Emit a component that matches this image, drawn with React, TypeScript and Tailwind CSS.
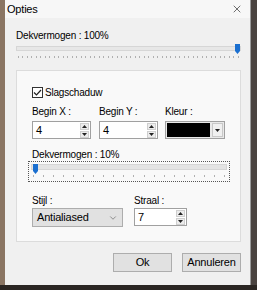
import { ChevronDown, X } from "lucide-react";

const font = { fontFamily: '"Liberation Sans", Arial, sans-serif' };

function Spinner({ value, width }: { value: string; width: string }) {
  return (
    <div className={`${width} flex h-[18px] items-center border border-[#a0a0a0] bg-white`}>
      <span className="flex-1 pl-[3px] text-[11px] leading-none text-black">{value}</span>
      <div className="flex h-full w-[10px] flex-col justify-center gap-[1px] pr-[1px]">
        <div className="flex h-[7px] items-center justify-center border border-[#cfcfcf] bg-[#ececec]">
          <svg width="5" height="3" viewBox="0 0 5 3">
            <path d="M0 3 L2.5 0 L5 3 Z" fill="#222" />
          </svg>
        </div>
        <div className="flex h-[7px] items-center justify-center border border-[#cfcfcf] bg-[#ececec]">
          <svg width="5" height="3" viewBox="0 0 5 3">
            <path d="M0 0 L2.5 3 L5 0 Z" fill="#222" />
          </svg>
        </div>
      </div>
    </div>
  );
}

function Thumb() {
  return (
    <svg width="5" height="10" viewBox="0 0 5 10">
      <path d="M0 0 H5 V7 L2.5 10 L0 7 Z" fill="#1a6fd0" />
    </svg>
  );
}

function Ticks({ count }: { count: number }) {
  return (
    <div className="flex h-[2px] justify-between px-[2px]">
      {Array.from({ length: count }).map((_, i) => (
        <div key={i} className="h-[2px] w-[1px] bg-[#b0b0b0]" />
      ))}
    </div>
  );
}

const label = "text-[10px] leading-[12px] tracking-[-0.2px] text-black";

export default function App() {
  return (
    <div className="flex h-[290px] w-[257px] flex-col bg-[#2b2623]" style={font}>
      <div className="flex h-[285px]">
        <div className="w-[5px] bg-[#8a7563]" />
        <div className="flex w-[246px] flex-col border-r border-[#9a9a9a] bg-[#f0f0f0]">
          <div className="flex h-[18px] items-center justify-between bg-[#f7f7f7] pl-[2px] pr-[7px]">
            <span className="text-[11px] tracking-[-0.2px] text-black">Opties</span>
            <X size={12} strokeWidth={1.3} className="text-[#222]" />
          </div>
          <div className="flex flex-1 flex-col pl-[11px] pt-[12px]">
            <div className={label}>Dekvermogen : 100%</div>
            <div className="mt-[4px] w-[225px]">
              <div className="relative h-[5px] border border-[#d6d6d6] bg-[#e7e7e7]">
                <div className="absolute -top-[3px] right-[0px]">
                  <Thumb />
                </div>
              </div>
            </div>
            <div className="mt-[5px] w-[225px]">
              <Ticks count={50} />
            </div>
            <div className="mt-[12px] flex h-[172px] w-[225px] flex-col border border-[#dcdcdc] bg-[#f9f9f9] pl-[15px] pt-[16px]">
              <div className="flex h-[11px] items-center gap-[2px]">
                <div className="flex h-[11px] w-[11px] items-center justify-center border border-[#333] bg-white">
                  <svg width="9" height="7" viewBox="0 0 9 7">
                    <path d="M1 3.5 L3.5 6 L8 1" fill="none" stroke="#222" strokeWidth="1.2" />
                  </svg>
                </div>
                <span className={label}>Slagschaduw</span>
              </div>
              <div className="mt-[8px] flex">
                <div className="flex flex-col gap-[3px]">
                  <span className={label}>Begin X :</span>
                  <Spinner value="4" width="w-[59px]" />
                </div>
                <div className="ml-[8px] flex flex-col gap-[3px]">
                  <span className={label}>Begin Y :</span>
                  <Spinner value="4" width="w-[59px]" />
                </div>
                <div className="ml-[7px] flex flex-col gap-[3px]">
                  <span className={label}>Kleur :</span>
                  <div className="flex h-[18px] w-[60px] items-center gap-[2px] border border-[#a0a0a0] bg-[#e9e9e9] px-[1px]">
                    <div className="h-[14px] flex-1 bg-black" />
                    <div className="flex h-[14px] w-[11px] items-center justify-center border border-[#c8c8c8] bg-[#f0f0f0]">
                      <svg width="5" height="3" viewBox="0 0 5 3">
                        <path d="M0 0 L2.5 3 L5 0 Z" fill="#222" />
                      </svg>
                    </div>
                  </div>
                </div>
              </div>
              <div className={`mt-[10px] ${label} leading-[11px]`}>Dekvermogen : 10%</div>
              <div className="ml-[-4px] flex h-[21px] w-[202px] flex-col border border-dotted border-[#555] pt-[2px]">
                <div className="relative mx-[2px] h-[6px] border border-[#d6d6d6] bg-[#e4e4e4]">
                  <div className="absolute left-[1px] -top-[1px]">
                    <Thumb />
                  </div>
                </div>
                <div className="mt-[5px] px-[2px]">
                  <Ticks count={20} />
                </div>
              </div>
              <div className="mt-[13px] flex">
                <div className="flex flex-col gap-[1px]">
                  <span className={`${label} leading-[11px]`}>Stijl :</span>
                  <div className="flex h-[19px] w-[91px] items-center justify-between border border-[#adadad] bg-[#e1e1e1] px-[4px]">
                    <span className="text-[11px] leading-none tracking-[-0.2px] text-black">Antialiased</span>
                    <ChevronDown size={10} strokeWidth={1.3} className="text-[#444]" />
                  </div>
                </div>
                <div className="ml-[11px] flex flex-col gap-[1px]">
                  <span className={`${label} leading-[11px]`}>Straal :</span>
                  <Spinner value="7" width="w-[53px]" />
                </div>
              </div>
            </div>
            <div className="ml-[97px] mt-[11px] flex gap-[10px]">
              <div className="flex h-[19px] w-[59px] items-center justify-center border border-[#adadad] bg-[#e1e1e1] text-[11px] tracking-[-0.2px] text-black">
                Ok
              </div>
              <div className="flex h-[19px] w-[59px] items-center justify-center border border-[#adadad] bg-[#e1e1e1] text-[11px] tracking-[-0.2px] text-black">
                Annuleren
              </div>
            </div>
          </div>
        </div>
        <div className="flex-1 bg-[#4a4340]" />
      </div>
    </div>
  );
}
